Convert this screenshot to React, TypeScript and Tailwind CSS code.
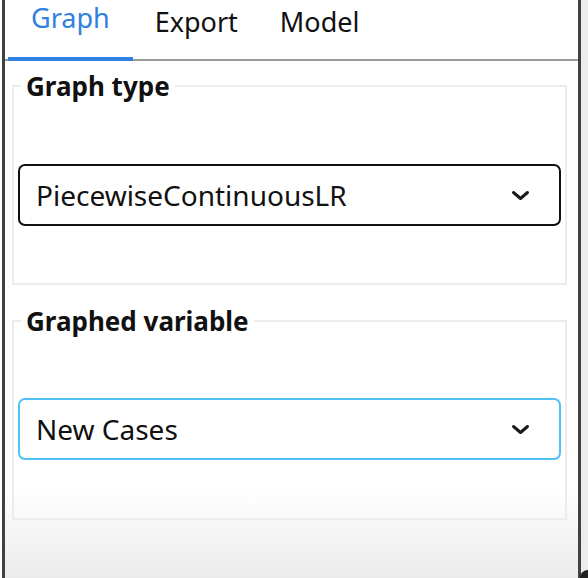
import React from "react";

const font = { fontFamily: '"Noto Sans", "Open Sans", sans-serif' };

function Chevron() {
  return (
    <svg width="19" height="11" viewBox="0 0 19 11" className="shrink-0">
      <path d="M2.5 2.5 L9.5 8.5 L16.5 2.5" fill="none" stroke="#1a1a1a" strokeWidth="3" strokeLinecap="round" strokeLinejoin="round" />
    </svg>
  );
}

function Select({ value, active }: { value: string; active?: boolean }) {
  return (
    <div
      className={
        "w-full rounded-[7px] border-2 flex items-center justify-between pl-[16px] pr-[29px] bg-white h-[62px] " +
        (active ? "border-[#4fc3f7]" : "border-[#111111]")
      }
    >
      <span className="text-[28px] text-[#111] leading-none">{value}</span>
      <Chevron />
    </div>
  );
}

function Group({ title, pt, pb, children }: { title: string; pt: string; pb: string; children: React.ReactNode }) {
  return (
    <fieldset className={"border-2 border-[#ececec] px-[4px] ml-[7px] mr-[11px] " + pt + " " + pb}>
      <legend className="ml-[3px] px-[5px] text-[26px] font-bold text-[#111] leading-[32px]">{title}</legend>
      {children}
    </fieldset>
  );
}

export default function App() {
  return (
    <div className="w-[588px] h-[578px] bg-white flex relative overflow-hidden" style={font}>
      <div className="w-[2px] h-full bg-white" />
      <div className="w-[579px] h-full border-l-[3px] border-r-[3px] border-[#3d4342] bg-[linear-gradient(to_bottom,#ffffff_0%,#ffffff_85%,#ebebeb_100%)] flex flex-col">
        <div className="h-[61px] border-b-2 border-[#9a9a9a] flex items-stretch pl-[3px] relative">
          <div className="relative px-[23px] flex items-start">
            <span className="text-[27px] leading-[36px] text-[#2f80e0]">Graph</span>
            <div className="absolute left-0 right-0 bottom-[-2px] h-[4px] bg-[#2f80e0]" />
          </div>
          <div className="pl-[22px] pr-[20px] flex items-start pt-[4px]">
            <span className="text-[27px] leading-[36px] text-[#111]">Export</span>
          </div>
          <div className="px-[22px] flex items-start pt-[4px]">
            <span className="text-[27px] leading-[36px] text-[#111]">Model</span>
          </div>
        </div>
        <div className="pt-[9px] flex flex-col gap-[20px]">
          <Group title="Graph type" pt="pt-[62px]" pb="pb-[57px]">
            <Select value="PiecewiseContinuousLR" />
          </Group>
          <Group title="Graphed variable" pt="pt-[61px]" pb="pb-[58px]">
            <Select value="New Cases" active />
          </Group>
        </div>
      </div>
      <div className="flex-1 h-full bg-[#ececec] relative">
        <div className="absolute right-0 bottom-0 w-[8px] h-[8px] bg-[#222] rounded-tl-full" />
      </div>
    </div>
  );
}
